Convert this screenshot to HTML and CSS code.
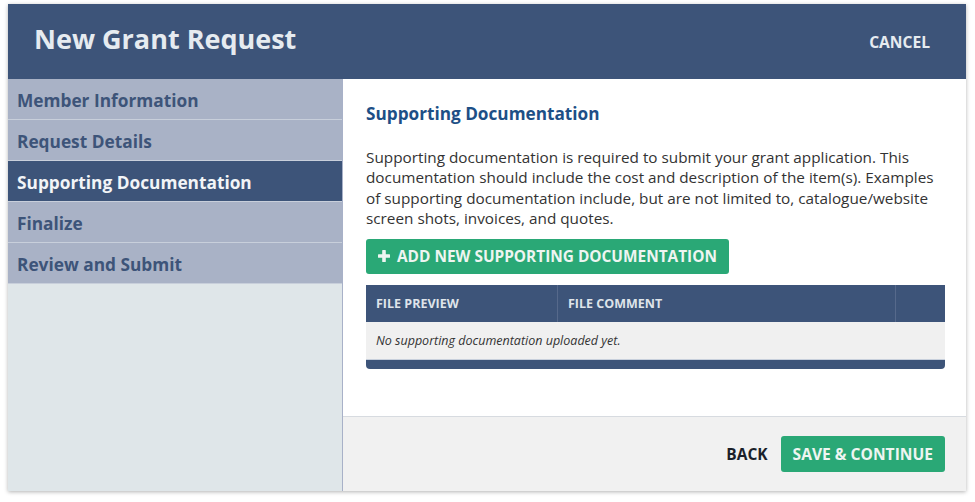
FILE: index.html
```html
<!DOCTYPE html>
<html>
<head>
<meta charset="utf-8">
<link rel="stylesheet" href="styles.css">
</head>
<body>
<div class="modal">
  <header class="modal-header">
    <h1 class="modal-title">New Grant Request</h1>
    <a class="cancel">CANCEL</a>
  </header>
  <div class="modal-body">
    <nav class="steps">
      <div class="step">Member Information</div>
      <div class="step">Request Details</div>
      <div class="step active">Supporting Documentation</div>
      <div class="step">Finalize</div>
      <div class="step">Review and Submit</div>
    </nav>
    <section class="panel">
      <div class="panel-content">
        <h2 class="section-title">Supporting Documentation</h2>
        <p class="intro">Supporting documentation is required to submit your grant application. This documentation should include the cost and description of the item(s). Examples of supporting documentation include, but are not limited to, catalogue/website screen shots, invoices, and quotes.</p>
        <button class="btn btn-add"><svg class="plus" viewBox="0 0 12 12" width="12" height="12"><path d="M4.2 0.6Q4.2 0 4.8 0h2.4q0.6 0 0.6 0.6v3.6h3.6q0.6 0 0.6 0.6v2.4q0 0.6-0.6 0.6H7.8v3.6q0 0.6-0.6 0.6H4.8q-0.6 0-0.6-0.6V7.8H0.6Q0 7.8 0 7.2V4.8q0-0.6 0.6-0.6h3.6z" fill="currentColor"/></svg>ADD NEW SUPPORTING DOCUMENTATION</button>
        <div class="table">
          <div class="thead">
            <div class="th c1">FILE PREVIEW</div>
            <div class="th c2">FILE COMMENT</div>
            <div class="th c3"></div>
          </div>
          <div class="empty">No supporting documentation uploaded yet.</div>
          <div class="tfoot"></div>
        </div>
      </div>
      <footer class="panel-footer">
        <button class="btn-link">BACK</button>
        <button class="btn btn-save">SAVE &amp; CONTINUE</button>
      </footer>
    </section>
  </div>
</div>
</body>
</html>
```
FILE: styles.css
```css
* { box-sizing: border-box; }
html, body { margin: 0; padding: 0; background: #fff; }
body {
  font-family: "Open Sans", "Noto Sans", sans-serif;
  padding: 4px 9px 11px 8px;
}
.modal {
  width: 958px;
  height: 487px;
  display: flex;
  flex-direction: column;
  box-shadow: 0 1px 4px rgba(0,0,0,0.3);
}
.modal-header {
  height: 75px;
  background: #3d5479;
  display: flex;
  align-items: center;
  justify-content: space-between;
  padding: 0 36px 0 26px;
  flex-shrink: 0;
}
.modal-title {
  margin: 0 0 5px;
  font-size: 27px;
  font-weight: 700;
  color: #e6ebf0;
  line-height: 36px;
}
.cancel {
  font-size: 15.6px;
  font-weight: 700;
  color: #e6ebf0;
  margin-top: 1px;
}
.modal-body {
  flex: 1;
  display: flex;
  min-height: 0;
}
.steps {
  width: 335px;
  background: #dfe6e9;
  border-right: 1px solid #a8b1c8;
  display: flex;
  flex-direction: column;
  flex-shrink: 0;
}
.step {
  height: 41px;
  background: #a9b2c6;
  color: #3d5479;
  font-size: 17.3px;
  font-weight: 700;
  padding: 2px 9px 0;
  display: flex;
  align-items: center;
  border-bottom: 1px solid #c8cfdb;
}
.step.active { background: #3d5479; color: #f2f4f7; }
.panel {
  flex: 1;
  display: flex;
  flex-direction: column;
  background: #fff;
}
.panel-content {
  flex: 1;
  padding: 23px 21px 0 23px;
}
.section-title {
  margin: 0;
  font-size: 17.2px;
  font-weight: 700;
  color: #1d4f86;
  line-height: 24px;
}
.intro {
  margin: 21px 0 0;
  font-size: 15.3px;
  line-height: 20.4px;
  color: #333;
}
.btn {
  border: none;
  border-radius: 3px;
  background: #2aa876;
  color: #eef5f1;
  font-family: "Open Sans", "Noto Sans", sans-serif;
  font-weight: 700;
  font-size: 15.6px;
  cursor: pointer;
  display: flex;
  align-items: center;
}
.btn-add {
  margin-top: 10px;
  height: 35px;
  padding: 0 12px 0 12px;
  gap: 7px;
  font-size: 15.4px;
}
.plus { width: 12px; height: 12px; }
.table {
  margin-top: 11px;
  border-radius: 0 0 4px 4px;
  overflow: hidden;
}
.thead {
  display: flex;
  height: 37px;
  background: #3d5479;
}
.th {
  font-size: 12.5px;
  font-weight: 700;
  color: #dfe4ea;
  display: flex;
  align-items: center;
  padding: 0 10px;
}
.c1 { width: 192px; border-right: 1px solid #56698b; }
.c2 { width: 338px; border-right: 1px solid #56698b; }
.c3 { flex: 1; }
.empty {
  height: 38px;
  background: #f0f0f0;
  font-size: 12.5px;
  font-style: italic;
  color: #333;
  display: flex;
  align-items: center;
  padding: 0 10px;
  border-bottom: 1px solid #c8d0dc;
}
.tfoot {
  height: 9px;
  background: #3d5479;
}
.panel-footer {
  height: 75px;
  background: #f1f1f1;
  border-top: 1px solid #d7dbe0;
  display: flex;
  align-items: center;
  justify-content: flex-end;
  padding: 0 21px 0 0;
  gap: 13px;
  flex-shrink: 0;
}
.btn-link {
  border: none;
  background: none;
  font-family: "Open Sans", "Noto Sans", sans-serif;
  font-weight: 700;
  font-size: 15.5px;
  color: #1a1f2a;
  padding: 0;
}
.btn-save {
  height: 36px;
  padding: 0 12px;
}
```
